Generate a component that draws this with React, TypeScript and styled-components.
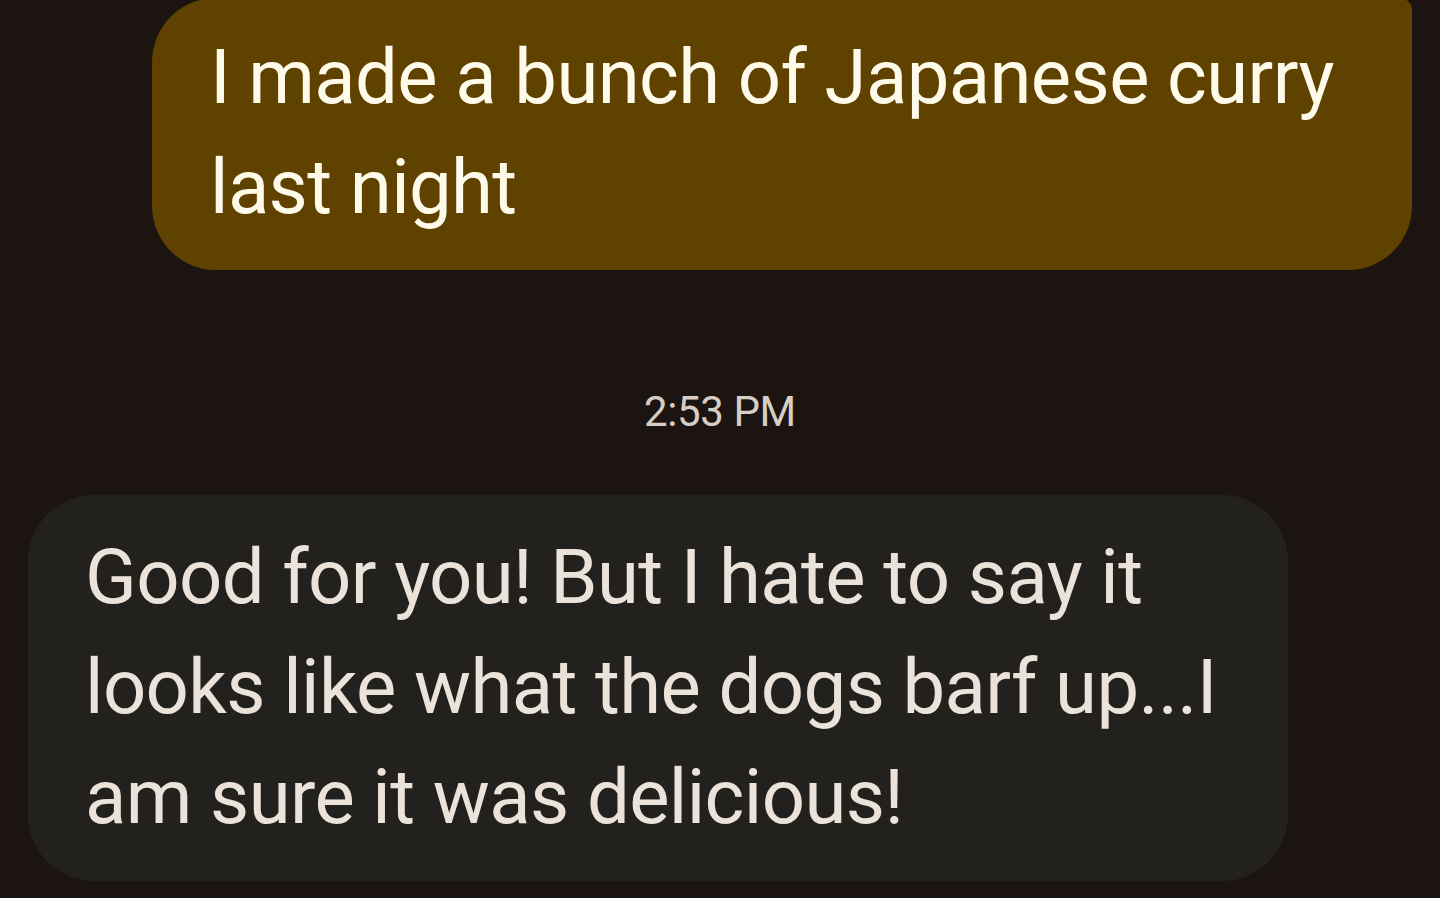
import React from "react";
import styled, { createGlobalStyle } from "styled-components";

const Global = createGlobalStyle`
  html, body {
    margin: 0;
    padding: 0;
    background: #1b1410;
    height: 100%;
    overflow: hidden;
  }
  body {
    font-family: Roboto, "Noto Sans", "Liberation Sans", sans-serif;
  }
`;

const Thread = styled.div`
  display: flex;
  flex-direction: column;
  padding: 0 28px;
  margin-top: -2px;
  background: #1b1410;
  height: 900px;
  box-sizing: border-box;
`;

const Row = styled.div<{ $out?: boolean }>`
  display: flex;
  justify-content: ${(p) => (p.$out ? "flex-end" : "flex-start")};
`;

const Bubble = styled.div<{ $out?: boolean }>`
  box-sizing: border-box;
  max-width: 1260px;
  width: 1260px;
  padding: ${(p) => (p.$out ? "24px 60px 28px 58px" : "27px 60px 29px 57px")};
  background: ${(p) => (p.$out ? "#5f4100" : "#23211e")};
  color: ${(p) => (p.$out ? "#fffbea" : "#ebe3da")};
  border-radius: ${(p) => (p.$out ? "64px 12px 64px 64px" : "66px 66px 66px 66px")};
  font-size: 76px;
  line-height: 110px;
  letter-spacing: -0.6px;
`;

const Stamp = styled.div`
  text-align: center;
  color: #d6cec4;
  font-size: 42px;
  letter-spacing: -0.4px;
  line-height: 52px;
  margin: 116px 0 57px;
`;

export default function App() {
  return (
    <>
      <Global />
      <Thread>
        <Row $out>
          <Bubble $out>I made a bunch of Japanese curry last night</Bubble>
        </Row>
        <Stamp>2:53 PM</Stamp>
        <Row>
          <Bubble>
            Good for you! But I hate to say it looks like what the dogs barf up...I am sure it was delicious!
          </Bubble>
        </Row>
      </Thread>
    </>
  );
}
